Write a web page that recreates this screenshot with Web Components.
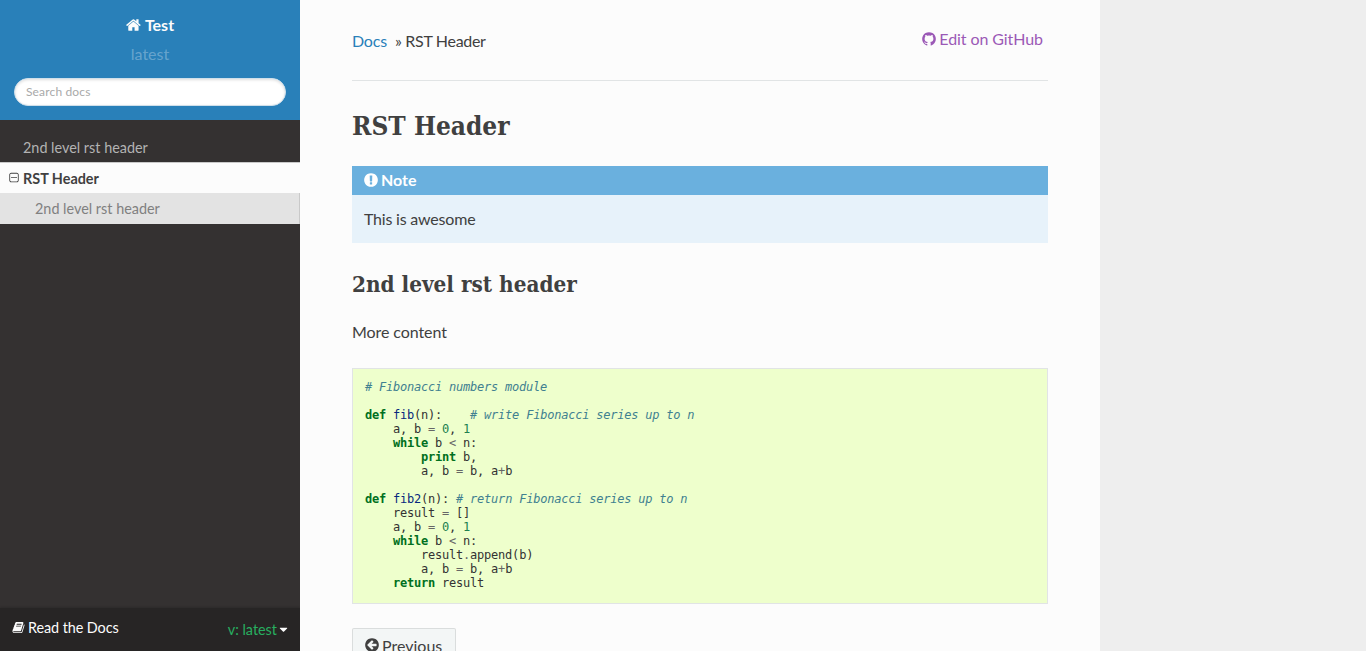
<!DOCTYPE html>
<html>
<head>
<meta charset="utf-8">
<title>RST Header</title>
<style>
  html, body { margin: 0; height: 651px; overflow: hidden; background: #eee; }
  body { font-family: Lato, "Liberation Sans", sans-serif; font-size: 16px; color: #404040; }
</style>
</head>
<body>
<rtd-page>
  <rtd-sidebar slot="side" project="Test" version="latest">
    <rtd-nav-item level="0">2nd level rst header</rtd-nav-item>
    <rtd-nav-item level="1">RST Header</rtd-nav-item>
    <rtd-nav-item level="2">2nd level rst header</rtd-nav-item>
  </rtd-sidebar>
  <rtd-content>
    <rtd-breadcrumbs current="RST Header"></rtd-breadcrumbs>
    <rtd-heading level="1">RST Header</rtd-heading>
    <rtd-note title="Note">This is awesome</rtd-note>
    <rtd-heading level="2">2nd level rst header</rtd-heading>
    <rtd-para>More content</rtd-para>
    <rtd-code></rtd-code>
    <rtd-button>Previous</rtd-button>
  </rtd-content>
</rtd-page>

<script>
const ICONS = {
  home: 'M1408 992v480q0 26-19 45t-45 19h-384v-384h-256v384h-384q-26 0-45-19t-19-45v-480q0-1 .5-3t.5-3l575-474 575 474q1 2 1 6zm223-69l-62 74q-8 9-21 11h-3q-13 0-21-7l-692-577-692 577q-12 8-24 7-13-2-21-11l-62-74q-8-10-7-23.5t11-21.5l719-599q32-26 76-26t76 26l244 204v-195q0-14 9-23t23-9h192q14 0 23 9t9 23v408l219 182q10 8 11 21.5t-7 23.5z',
  book: 'M1703 478q40 57 18 129l-275 906q-19 64-76.5 107.5t-122.5 43.5h-923q-77 0-148.5-53.5t-99.5-131.5q-24-67-2-127 0-4 3-27t4-37q1-8-3-21.5t-3-19.5q2-11 8-21t16.5-23.5 16.5-23.5q23-38 45-91.5t30-91.5q3-10 .5-30t-.5-28q3-11 17-28t17-23q21-36 42-92t25-90q1-9-2.5-32t.5-28q4-13 22-30.5t22-22.5q19-26 42.5-84.5t27.5-96.5q1-8-3-25.5t-2-26.5q2-8 9-18t18-23 17-21q8-12 16.5-30.5t15-35 16-36 19.5-32 26.5-23.5 36-11.5 47.5 5.5l-1 3q38-9 51-9h761q74 0 114 56t18 130l-274 906q-36 119-71.5 153.5t-128.5 34.5h-869q-27 0-38 15-11 16-1 43 24 70 144 70h923q29 0 56-15.5t35-41.5l300-987q7-22 5-57 38 15 59 43zm-1064 2q-4 13 2 22.5t20 9.5h608q13 0 25.5-9.5t16.5-22.5l21-64q4-13-2-22.5t-20-9.5h-608q-13 0-25.5 9.5t-16.5 22.5zm-83 256q-4 13 2 22.5t20 9.5h608q13 0 25.5-9.5t16.5-22.5l21-64q4-13-2-22.5t-20-9.5h-608q-13 0-25.5 9.5t-16.5 22.5z',
  github: 'M896 128q209 0 385.5 103t279.5 279.5 103 385.5q0 251-146.5 451.5t-378.5 277.5q-27 5-40-7t-13-30q0-3 .5-76.5t.5-134.5q0-97-52-142 57-6 102.5-18t94-39 81-66.5 53-105 20.5-150.5q0-119-79-206 37-91-8-204-28-9-81 11t-92 44l-38 24q-93-26-192-26t-192 26q-16-11-42.5-27t-83.5-38.5-85-13.5q-45 113-8 204-79 87-79 206 0 85 20.5 150t52.5 105 80.5 67 94 39 102.5 18q-39 36-49 103-21 10-45 15t-57 5-65.5-21.5-55.5-62.5q-19-32-48.5-52t-49.5-24l-20-3q-21 0-29 4.5t-5 11.5 9 14 13 12l7 5q22 10 43.5 38t31.5 51l10 23q13 38 44 61.5t67 30 69.5 7 55.5-3.5l23-4q0 38 .5 88.5t.5 54.5q0 18-13 30t-40 7q-232-77-378.5-277.5t-146.5-451.5q0-209 103-385.5t279.5-279.5 385.5-103z',
  note: 'M896 128q209 0 385.5 103t279.5 279.5 103 385.5-103 385.5-279.5 279.5-385.5 103-385.5-103-279.5-279.5-103-385.5 103-385.5 279.5-279.5 385.5-103zm128 1247v-190q0-14-9-23.5t-22-9.5h-192q-13 0-23 10t-10 23v190q0 13 10 23t23 10h192q13 0 22-9.5t9-23.5zm-2-344l18-621q0-12-10-18-10-8-24-8h-220q-14 0-24 8-10 6-10 18l17 621q0 10 10 17.5t24 7.5h185q14 0 23.5-7.5t10.5-17.5z',
  back: 'M1408 960v-128q0-26-19-45t-45-19h-502l189-189q19-19 19-45t-19-45l-91-91q-18-18-45-18t-45 18l-362 362-91 91q-18 18-18 45t18 45l91 91 362 362q18 18 45 18t45-18l91-91q18-18 18-45t-18-45l-189-189h502q26 0 45-19t19-45zm256-64q0 209-103 385.5t-279.5 279.5-385.5 103-385.5-103-279.5-279.5-103-385.5 103-385.5 279.5-279.5 385.5-103 385.5 103 279.5 279.5 103 385.5z',
  minus: 'M1344 800v64q0 14-9 23t-23 9h-832q-14 0-23-9t-9-23v-64q0-14 9-23t23-9h832q14 0 23 9t9 23zm128 448v-832q0-66-47-113t-113-47h-832q-66 0-113 47t-47 113v832q0 66 47 113t113 47h832q66 0 113-47t47-113zm128-832v832q0 119-84.5 203.5t-203.5 84.5h-832q-119 0-203.5-84.5t-84.5-203.5v-832q0-119 84.5-203.5t203.5-84.5h832q119 0 203.5 84.5t84.5 203.5z',
  caret: 'M1408 704q0 26-19 45l-448 448q-19 19-45 19t-45-19l-448-448q-19-19-19-45t19-45 45-19h896q26 0 45 19t19 45z'
};

class FaIcon extends HTMLElement {
  connectedCallback() {
    const size = this.getAttribute('size') || '16';
    this.attachShadow({mode: 'open'}).innerHTML = `
      <style>
        :host { display: inline-flex; align-items: center; }
        svg { display: block; fill: currentColor; }
      </style>
      <svg width="${size}" height="${size}" viewBox="0 0 1792 1792"><path d="${ICONS[this.getAttribute('name')]}"/></svg>
    `;
  }
}
customElements.define('fa-icon', FaIcon);

class Page extends HTMLElement {
  connectedCallback() {
    this.attachShadow({mode: 'open'}).innerHTML = `
      <style>
        :host { display: flex; height: 651px; overflow: hidden; }
      </style>
      <slot name="side"></slot>
      <slot></slot>
    `;
  }
}
customElements.define('rtd-page', Page);

class Sidebar extends HTMLElement {
  connectedCallback() {
    this.attachShadow({mode: 'open'}).innerHTML = `
      <style>
        :host { display: flex; flex-direction: column; width: 300px; height: 651px; flex: none; background: #343131; }
        .top { height: 120px; box-sizing: border-box; padding-top: 15px; background: #2980b9; text-align: center; color: #fcfcfc; }
        .project { display: flex; justify-content: center; align-items: center; gap: 3px; height: 19px; font-size: 16px; font-weight: 700; }
        .version { margin-top: 10px; height: 19px; line-height: 19px; font-size: 16px; color: rgba(255,255,255,.3); }
        input {
          display: block; box-sizing: border-box; width: 272px; height: 28px; margin: 15px 14px 0;
          padding: 5px 11px 7px; border: 1px solid #cfdfea; border-radius: 50px;
          box-shadow: inset 0 1px 3px #ddd; font: 12px Lato, sans-serif; letter-spacing: .15px; color: #404040; background: #fff; outline: none;
        }
        input::placeholder { color: #a9a9a9; opacity: 1; }
        .menu { flex: 1; padding-top: 12px; }
      </style>
      <div class="top">
        <div class="project"><fa-icon name="home" size="16"></fa-icon><span>${this.getAttribute('project')}</span></div>
        <div class="version">${this.getAttribute('version')}</div>
        <input type="text" placeholder="Search docs">
      </div>
      <div class="menu"><slot></slot></div>
      <rtd-versions></rtd-versions>
    `;
  }
}
customElements.define('rtd-sidebar', Sidebar);

class NavItem extends HTMLElement {
  connectedCallback() {
    const level = this.getAttribute('level');
    const icon = level === '1' ? '<fa-icon name="minus" size="12"></fa-icon>' : '';
    this.attachShadow({mode: 'open'}).innerHTML = `
      <style>
        :host { display: block; box-sizing: border-box; font-size: 14.4px; line-height: 18px; position: relative; }
        :host([level="0"]) { height: 30px; padding: 7px 0 0 23px; color: #b3b3b3; }
        :host([level="1"]) { height: 32px; padding: 7px 0 0 23px; color: #404040; font-weight: 700; background: #fcfcfc; border-top: 1px solid #c9c9c9; border-bottom: 1px solid #c9c9c9; }
        :host([level="2"]) { height: 31px; margin-top: -1px; padding: 7px 0 0 35px; color: #808080; background: #e3e3e3; border-right: 1px solid #c9c9c9; border-bottom: 0; }
        fa-icon { position: absolute; left: 8px; top: 9px; color: #404040; }
      </style>
      ${icon}<slot></slot>
    `;
  }
}
customElements.define('rtd-nav-item', NavItem);

class Versions extends HTMLElement {
  connectedCallback() {
    this.attachShadow({mode: 'open'}).innerHTML = `
      <style>
        :host { display: flex; justify-content: space-between; align-items: center; box-sizing: border-box; height: 43px; padding: 0 10px 4px 12px; background: #272525; font-size: 14.4px; box-shadow: 0 -1px 2px rgba(0,0,0,.15); }
        .brand { display: flex; align-items: center; gap: 3px; color: #fcfcfc; letter-spacing: -.08px; }
        .current { display: flex; align-items: center; gap: 0; color: #27ae60; padding-top: 4px; }
        .caret { color: #fcfcfc; }
      </style>
      <span class="brand"><fa-icon name="book" size="13"></fa-icon>Read the Docs</span>
      <span class="current">v: latest<fa-icon class="caret" name="caret" size="13"></fa-icon></span>
    `;
  }
}
customElements.define('rtd-versions', Versions);

class Content extends HTMLElement {
  connectedCallback() {
    this.attachShadow({mode: 'open'}).innerHTML = `
      <style>
        :host { display: block; box-sizing: border-box; width: 800px; height: 651px; flex: none; padding: 0 52px; background: #fcfcfc; overflow: hidden; }
      </style>
      <slot></slot>
    `;
  }
}
customElements.define('rtd-content', Content);

class Breadcrumbs extends HTMLElement {
  connectedCallback() {
    this.attachShadow({mode: 'open'}).innerHTML = `
      <style>
        :host { display: flex; justify-content: space-between; box-sizing: border-box; height: 81px; padding-top: 31px; border-bottom: 1px solid #e1e4e5; line-height: 20px; font-size: 16px; }
        a { color: #2980b9; text-decoration: none; margin-right: 8px; letter-spacing: -.2px; }
        .current { letter-spacing: -.3px; }
        .edit { display: flex; align-items: center; gap: 2px; height: 20px; margin: -2px 5px 0 0; color: #9b59b6; letter-spacing: -.08px; }
      </style>
      <span><a href="#">Docs</a><span class="current">» ${this.getAttribute('current')}</span></span>
      <span class="edit"><fa-icon name="github" size="16"></fa-icon>Edit on GitHub</span>
    `;
  }
}
customElements.define('rtd-breadcrumbs', Breadcrumbs);

class Heading extends HTMLElement {
  connectedCallback() {
    this.attachShadow({mode: 'open'}).innerHTML = `
      <style>
        :host { display: block; font-family: "DejaVu Serif Condensed", "DejaVu Serif", serif; font-weight: 700; color: #404040; }
        :host([level="1"]) { font-size: 26px; line-height: 36px; margin: 27px 0 22px; }
        :host([level="2"]) { font-size: 22.3px; line-height: 30px; margin: 26px 0 21px; }
      </style>
      <slot></slot>
    `;
  }
}
customElements.define('rtd-heading', Heading);

class Note extends HTMLElement {
  connectedCallback() {
    this.attachShadow({mode: 'open'}).innerHTML = `
      <style>
        :host { display: block; background: #e7f2fa; }
        .title { display: flex; align-items: center; gap: 2px; box-sizing: border-box; height: 29px; padding: 0 12px 2px 11px; background: #6ab0de; color: #fff; font-weight: 700; }
        .body { box-sizing: border-box; height: 48px; padding: 12px; line-height: 24px; letter-spacing: -.2px; }
      </style>
      <div class="title"><fa-icon name="note" size="16"></fa-icon>${this.getAttribute('title')}</div>
      <div class="body"><slot></slot></div>
    `;
  }
}
customElements.define('rtd-note', Note);

class Para extends HTMLElement {
  connectedCallback() {
    this.attachShadow({mode: 'open'}).innerHTML = `
      <style>
        :host { display: block; line-height: 24px; margin-bottom: 24px; letter-spacing: -.08px; }
      </style>
      <slot></slot>
    `;
  }
}
customElements.define('rtd-para', Para);

const SOURCE = `<i># Fibonacci numbers module</i>

<b>def</b> <u>fib</u>(n):    <i># write Fibonacci series up to n</i>
    a, b <o>=</o> <n>0</n>, <n>1</n>
    <b>while</b> b <o>&lt;</o> n:
        <b>print</b> b,
        a, b <o>=</o> b, a<o>+</o>b

<b>def</b> <u>fib2</u>(n): <i># return Fibonacci series up to n</i>
    result <o>=</o> []
    a, b <o>=</o> <n>0</n>, <n>1</n>
    <b>while</b> b <o>&lt;</o> n:
        result<o>.</o>append(b)
        a, b <o>=</o> b, a<o>+</o>b
    <b>return</b> result`;

class Code extends HTMLElement {
  connectedCallback() {
    this.attachShadow({mode: 'open'}).innerHTML = `
      <style>
        :host { display: block; box-sizing: border-box; height: 236px; padding: 11px 12px; background: #efc; border: 1px solid #e1e4e5; }
        pre { margin: 0; font: 12px/14px "DejaVu Sans Mono", monospace; letter-spacing: -.22px; color: #333; }
        i { color: #408090; font-style: italic; }
        b { color: #007020; font-weight: 700; }
        u { color: #06287e; text-decoration: none; }
        o { color: #666; }
        n { color: #208050; }
      </style>
      <pre>${SOURCE}</pre>
    `;
  }
}
customElements.define('rtd-code', Code);

class Button extends HTMLElement {
  connectedCallback() {
    this.attachShadow({mode: 'open'}).innerHTML = `
      <style>
        :host { display: inline-flex; align-items: center; gap: 2px; box-sizing: border-box; margin-top: 24px; height: 34px; padding: 0 13px 0 11px; background: #f3f6f6; border: 1px solid rgba(0,0,0,.1); border-radius: 2px; line-height: 19px; color: #404040; }
      </style>
      <fa-icon name="back" size="16"></fa-icon><slot></slot>
    `;
  }
}
customElements.define('rtd-button', Button);
</script>
</body>
</html>
